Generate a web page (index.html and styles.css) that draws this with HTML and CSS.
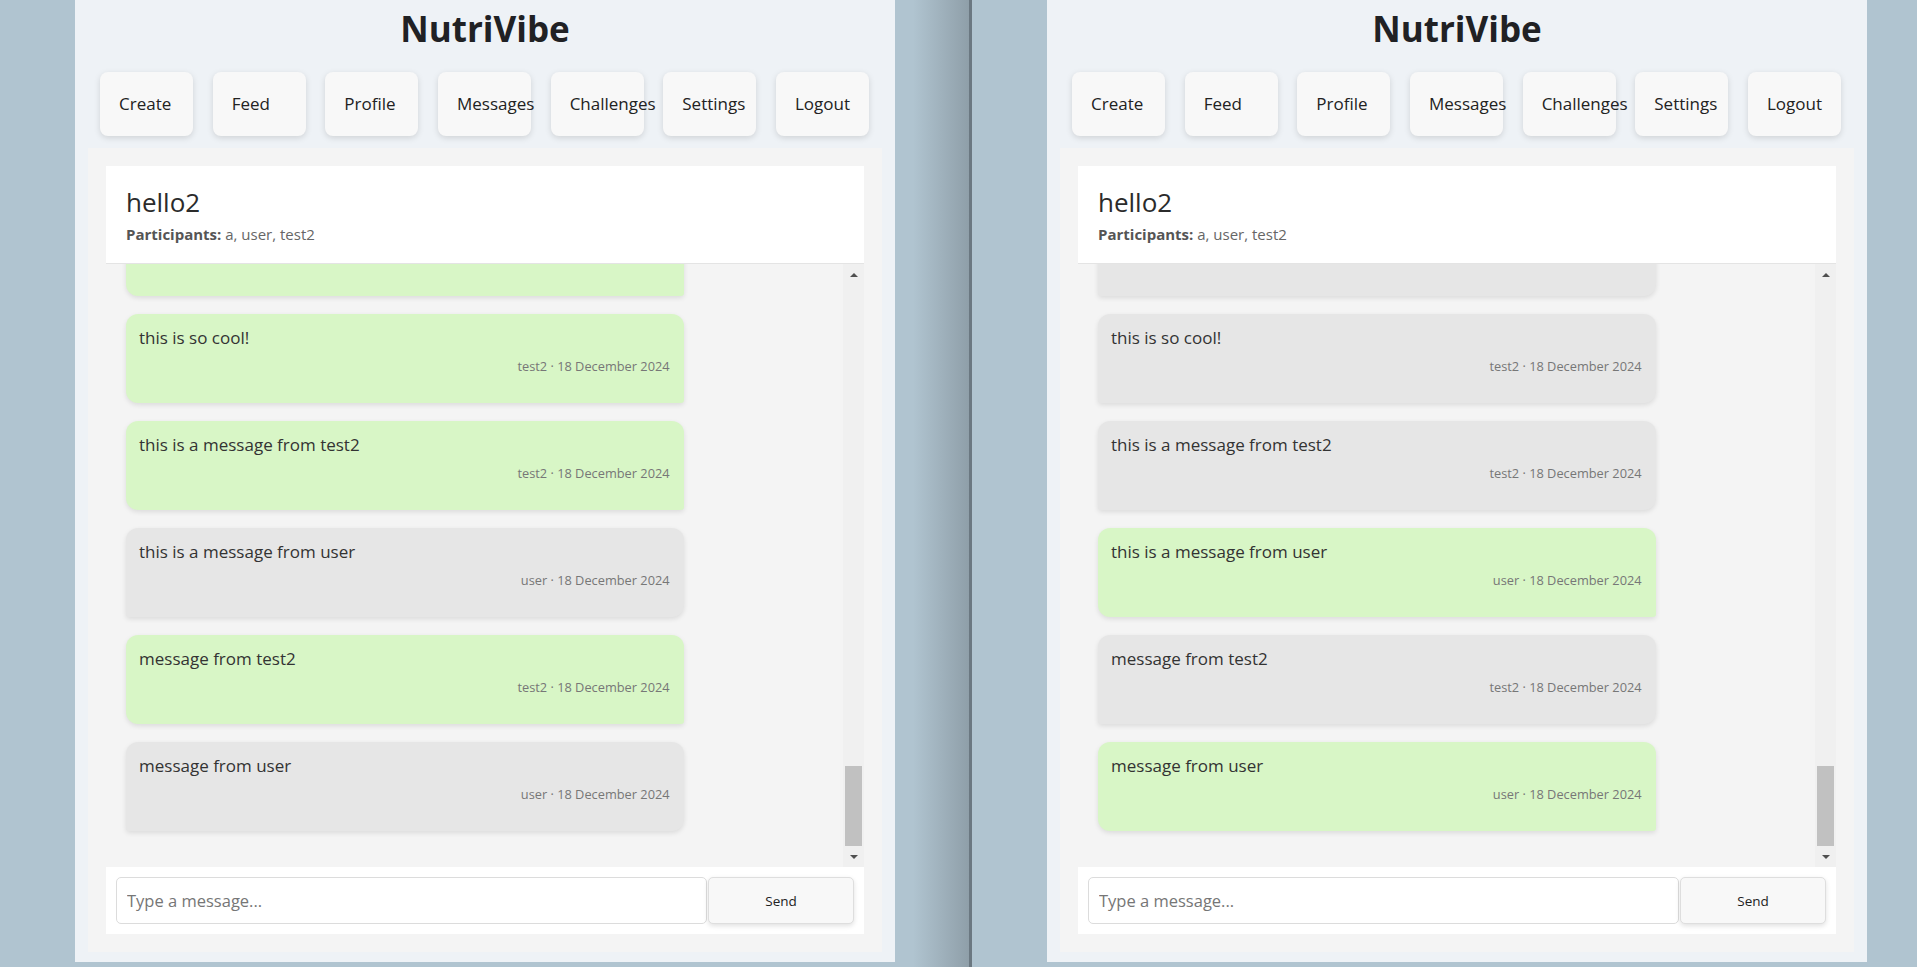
FILE: index.html
```html
<!DOCTYPE html>
<html lang="en">
<head>
<meta charset="utf-8">
<title>NutriVibe – Messages</title>
<link rel="stylesheet" href="styles.css">
</head>
<body>
<div class="desktop">
  <div class="window window-left">
    <div class="app">
      <h1 class="brand">NutriVibe</h1>
      <nav class="nav">
        <a class="nav-btn" href="#">Create</a>
        <a class="nav-btn" href="#">Feed</a>
        <a class="nav-btn" href="#">Profile</a>
        <a class="nav-btn" href="#">Messages</a>
        <a class="nav-btn" href="#">Challenges</a>
        <a class="nav-btn" href="#">Settings</a>
        <a class="nav-btn" href="#">Logout</a>
      </nav>
      <section class="chat">
        <header class="chat-header">
          <h2 class="chat-title">hello2</h2>
          <p class="participants"><strong>Participants:</strong> a, user, test2</p>
        </header>
        <div class="chat-body">
          <div class="messages">
            <div class="bubble own partial"></div>
            <div class="bubble own"><p class="bubble-text">this is so cool!</p><span class="bubble-meta">test2 · 18 December 2024</span></div>
            <div class="bubble own"><p class="bubble-text">this is a message from test2</p><span class="bubble-meta">test2 · 18 December 2024</span></div>
            <div class="bubble other"><p class="bubble-text">this is a message from user</p><span class="bubble-meta">user · 18 December 2024</span></div>
            <div class="bubble own"><p class="bubble-text">message from test2</p><span class="bubble-meta">test2 · 18 December 2024</span></div>
            <div class="bubble other"><p class="bubble-text">message from user</p><span class="bubble-meta">user · 18 December 2024</span></div>
          </div>
          <div class="scrollbar">
            <div class="sb-btn"><span class="sb-arrow up"></span></div>
            <div class="sb-track"><div class="sb-thumb"></div></div>
            <div class="sb-btn"><span class="sb-arrow down"></span></div>
          </div>
        </div>
        <form class="composer">
          <input class="composer-input" type="text" placeholder="Type a message...">
          <button class="composer-send" type="button">Send</button>
        </form>
      </section>
    </div>
  </div>
  <div class="divider"></div>
  <div class="window window-right">
    <div class="app">
      <h1 class="brand">NutriVibe</h1>
      <nav class="nav">
        <a class="nav-btn" href="#">Create</a>
        <a class="nav-btn" href="#">Feed</a>
        <a class="nav-btn" href="#">Profile</a>
        <a class="nav-btn" href="#">Messages</a>
        <a class="nav-btn" href="#">Challenges</a>
        <a class="nav-btn" href="#">Settings</a>
        <a class="nav-btn" href="#">Logout</a>
      </nav>
      <section class="chat">
        <header class="chat-header">
          <h2 class="chat-title">hello2</h2>
          <p class="participants"><strong>Participants:</strong> a, user, test2</p>
        </header>
        <div class="chat-body">
          <div class="messages">
            <div class="bubble other partial"></div>
            <div class="bubble other"><p class="bubble-text">this is so cool!</p><span class="bubble-meta">test2 · 18 December 2024</span></div>
            <div class="bubble other"><p class="bubble-text">this is a message from test2</p><span class="bubble-meta">test2 · 18 December 2024</span></div>
            <div class="bubble own"><p class="bubble-text">this is a message from user</p><span class="bubble-meta">user · 18 December 2024</span></div>
            <div class="bubble other"><p class="bubble-text">message from test2</p><span class="bubble-meta">test2 · 18 December 2024</span></div>
            <div class="bubble own"><p class="bubble-text">message from user</p><span class="bubble-meta">user · 18 December 2024</span></div>
          </div>
          <div class="scrollbar">
            <div class="sb-btn"><span class="sb-arrow up"></span></div>
            <div class="sb-track"><div class="sb-thumb"></div></div>
            <div class="sb-btn"><span class="sb-arrow down"></span></div>
          </div>
        </div>
        <form class="composer">
          <input class="composer-input" type="text" placeholder="Type a message...">
          <button class="composer-send" type="button">Send</button>
        </form>
      </section>
    </div>
  </div>
</div>
</body>
</html>
```
FILE: styles.css
```css
* { box-sizing: border-box; }

html, body {
  margin: 0;
  padding: 0;
  height: 100%;
}

body {
  background: #b0c4d0;
  font-family: "Open Sans", "Noto Sans", sans-serif;
  color: #222;
  overflow: hidden;
}

.desktop {
  display: flex;
  height: 967px;
}

.window {
  height: 100%;
  padding-left: 75px;
}

.window-left {
  width: 969px;
  flex: none;
  background: linear-gradient(90deg, #b0c4d0 0, #b0c4d0 913px, #8f9fa9 969px);
}

.divider {
  width: 3px;
  flex: none;
  background: #6b7881;
}

.window-right {
  flex: 1;
}

.app {
  width: 820px;
  height: 962px;
  background: #eef2f6;
  padding: 0 0 11px;
  display: flex;
  flex-direction: column;
}

.brand {
  margin: 0;
  height: 57px;
  line-height: 57px;
  text-align: center;
  font-size: 35px;
  font-weight: 700;
  color: #202124;
}

.nav {
  margin-top: 15px;
  padding: 0 26px 0 25px;
  display: flex;
  justify-content: space-between;
}

.nav-btn {
  width: 93px;
  height: 64px;
  flex: none;
  display: flex;
  align-items: center;
  padding: 0 19px 2px;
  background: #f8f8f8;
  border-radius: 8px;
  box-shadow: 0 2px 6px rgba(0, 0, 0, 0.13);
  color: #222;
  text-decoration: none;
  font-size: 17px;
  white-space: nowrap;
}

.chat {
  margin: 12px 13px 0;
  padding: 18px;
  background: #f4f4f4;
  flex: 1;
  display: flex;
  flex-direction: column;
}

.chat-header {
  background: #fff;
  padding: 18px 20px;
  border-bottom: 1px solid #e4e4e4;
}

.chat-title {
  margin: 0 0 4px;
  font-size: 26px;
  line-height: 36px;
  font-weight: 400;
  color: #2b2b2b;
}

.participants {
  margin: 0;
  font-size: 15px;
  line-height: 21px;
  color: #666;
}

.participants strong {
  color: #555;
  font-weight: 700;
}

.chat-body {
  height: 603px;
  display: flex;
}

.messages {
  flex: 1;
  min-width: 0;
  overflow: hidden;
  display: flex;
  flex-direction: column;
  justify-content: flex-end;
  gap: 18px;
  padding: 0 20px 36px;
}

.bubble {
  flex: none;
  width: 80%;
  padding: 12px 14px 28px 13px;
  box-shadow: 0 2px 5px rgba(0, 0, 0, 0.1);
}

.bubble.partial {
  height: 89px;
}

.bubble.own {
  background: #d8f6c6;
  border-radius: 12px 12px 3px 12px;
}

.bubble.other {
  background: #e6e6e6;
  border-radius: 12px 12px 12px 3px;
}

.bubble-text {
  margin: 0 0 7px;
  font-size: 17px;
  line-height: 24px;
  color: #333;
}

.bubble-meta {
  display: block;
  text-align: right;
  font-size: 12.8px;
  line-height: 18px;
  color: #777;
}

.scrollbar {
  width: 21px;
  flex: none;
  background: #f0f0f0;
  display: flex;
  flex-direction: column;
}

.sb-btn {
  height: 21px;
  flex: none;
  display: flex;
  align-items: center;
  justify-content: center;
}

.sb-arrow {
  width: 0;
  height: 0;
  border-left: 4px solid transparent;
  border-right: 4px solid transparent;
}

.sb-arrow.up {
  border-bottom: 4px solid #505050;
}

.sb-arrow.down {
  border-top: 4px solid #505050;
}

.sb-track {
  flex: 1;
  display: flex;
  flex-direction: column;
  justify-content: flex-end;
  padding: 0 2px;
}

.sb-thumb {
  height: 80px;
  background: #c1c1c1;
}

.composer {
  margin: 0;
  padding: 10px;
  background: #fff;
  display: flex;
  gap: 1px;
}

.composer-input {
  flex: 1;
  min-width: 0;
  height: 47px;
  border: 1px solid #dcdcdc;
  border-radius: 5px;
  padding: 0 10px;
  font-family: inherit;
  font-size: 16.5px;
  color: #333;
  background: #fff;
  outline: none;
}

.composer-input::placeholder {
  color: #767676;
}

.composer-send {
  width: 146px;
  height: 47px;
  flex: none;
  border: 1px solid #dedede;
  border-radius: 5px;
  background: #f8f8f8;
  box-shadow: 0 2px 5px rgba(0, 0, 0, 0.12);
  font-family: inherit;
  font-size: 13.5px;
  color: #222;
}
```
